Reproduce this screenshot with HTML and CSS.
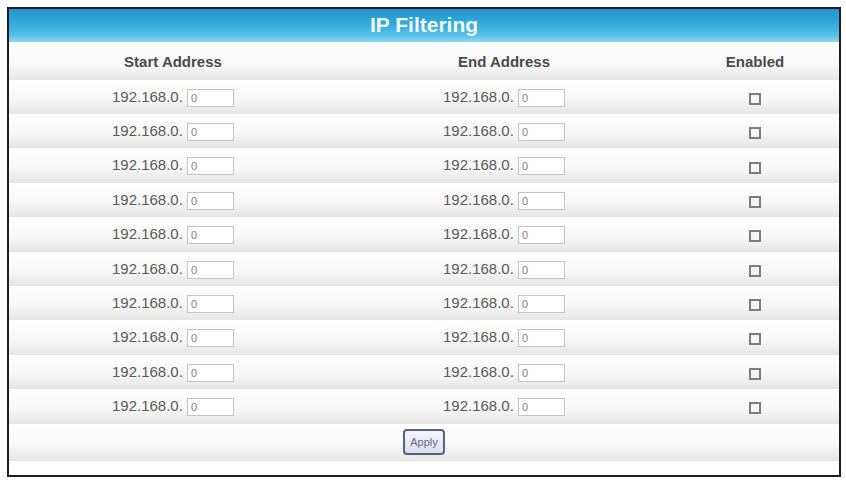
FILE: index.html
```html
<!DOCTYPE html>
<html lang="en">
<head>
<meta charset="utf-8">
<title>IP Filtering</title>
<link rel="stylesheet" href="styles.css">
</head>
<body>
<div class="panel">
  <div class="panel-title">IP Filtering</div>
  <table class="filter-table">
    <colgroup>
      <col class="col-start">
      <col class="col-end">
      <col class="col-enabled">
    </colgroup>
    <thead>
      <tr class="head-row">
        <th>Start Address</th>
        <th>End Address</th>
        <th>Enabled</th>
      </tr>
    </thead>
    <tbody>
      <tr class="row"><td>192.168.0. <input class="octet" type="text" value="0"></td><td>192.168.0. <input class="octet" type="text" value="0"></td><td><span class="check"></span></td></tr>
      <tr class="row"><td>192.168.0. <input class="octet" type="text" value="0"></td><td>192.168.0. <input class="octet" type="text" value="0"></td><td><span class="check"></span></td></tr>
      <tr class="row"><td>192.168.0. <input class="octet" type="text" value="0"></td><td>192.168.0. <input class="octet" type="text" value="0"></td><td><span class="check"></span></td></tr>
      <tr class="row"><td>192.168.0. <input class="octet" type="text" value="0"></td><td>192.168.0. <input class="octet" type="text" value="0"></td><td><span class="check"></span></td></tr>
      <tr class="row"><td>192.168.0. <input class="octet" type="text" value="0"></td><td>192.168.0. <input class="octet" type="text" value="0"></td><td><span class="check"></span></td></tr>
      <tr class="row"><td>192.168.0. <input class="octet" type="text" value="0"></td><td>192.168.0. <input class="octet" type="text" value="0"></td><td><span class="check"></span></td></tr>
      <tr class="row"><td>192.168.0. <input class="octet" type="text" value="0"></td><td>192.168.0. <input class="octet" type="text" value="0"></td><td><span class="check"></span></td></tr>
      <tr class="row"><td>192.168.0. <input class="octet" type="text" value="0"></td><td>192.168.0. <input class="octet" type="text" value="0"></td><td><span class="check"></span></td></tr>
      <tr class="row"><td>192.168.0. <input class="octet" type="text" value="0"></td><td>192.168.0. <input class="octet" type="text" value="0"></td><td><span class="check"></span></td></tr>
      <tr class="row"><td>192.168.0. <input class="octet" type="text" value="0"></td><td>192.168.0. <input class="octet" type="text" value="0"></td><td><span class="check"></span></td></tr>
      <tr class="apply-row"><td colspan="3"><button class="apply" type="button">Apply</button></td></tr>
    </tbody>
  </table>
  <div class="panel-foot"></div>
</div>
</body>
</html>
```

FILE: styles.css
```css
html, body {
  margin: 0;
  background: #ffffff;
}

body {
  padding: 7px;
  font-family: "Liberation Sans", Arial, sans-serif;
}

.panel {
  width: 830px;
  border: 2px solid #1e1e1e;
  background: #ffffff;
}

.panel-title {
  height: 33px;
  line-height: 31px;
  text-align: center;
  font-size: 21px;
  font-weight: bold;
  color: #eef8fd;
  background: linear-gradient(#2396cc 0%, #33a9da 45%, #59c0e8 80%, #8fd8f2 100%);
}

.filter-table {
  width: 830px;
  border-collapse: collapse;
  table-layout: fixed;
}

/* three columns: start, end, enabled */
.col-start { width: 328px; }
.col-end { width: 334px; }
.col-enabled { width: 168px; }

.filter-table th,
.filter-table td {
  padding: 0;
  text-align: center;
  vertical-align: middle;
}

.head-row {
  height: 38px;
  background: linear-gradient(#ffffff 0%, #f8f8f8 60%, #e6e6e6 100%);
}

.head-row th {
  font-size: 15px;
  font-weight: bold;
  color: #4a4a4a;
}

.row {
  height: 34.4px;
  background: linear-gradient(#ffffff 0%, #f7f7f7 55%, #e5e5e5 100%);
}

.row td {
  font-size: 15px;
  color: #5a5a5a;
}

.octet {
  box-sizing: border-box;
  width: 47px;
  height: 18px;
  margin: 0;
  padding: 0 3px;
  border: 1px solid #c4c4c4;
  background: #ffffff;
  font-family: "Liberation Sans", Arial, sans-serif;
  font-size: 11px;
  color: #8a8070;
  vertical-align: middle;
}

.check {
  display: inline-block;
  box-sizing: border-box;
  width: 12px;
  height: 12px;
  border: 2px solid #7d7d7d;
  background: #f4f4f4;
  vertical-align: middle;
}

.apply-row {
  height: 37px;
  background: linear-gradient(#ffffff 0%, #f8f8f8 55%, #e6e6e6 100%);
}

.apply {
  box-sizing: border-box;
  width: 42px;
  height: 26px;
  padding: 0;
  border: 2px solid #56647c;
  border-radius: 4px;
  background: linear-gradient(#f4f6fb, #d9e0ec);
  font-family: "Liberation Sans", Arial, sans-serif;
  font-size: 11px;
  color: #6a6490;
  vertical-align: middle;
}

.panel-foot {
  height: 14px;
  background: #ffffff;
}
```
